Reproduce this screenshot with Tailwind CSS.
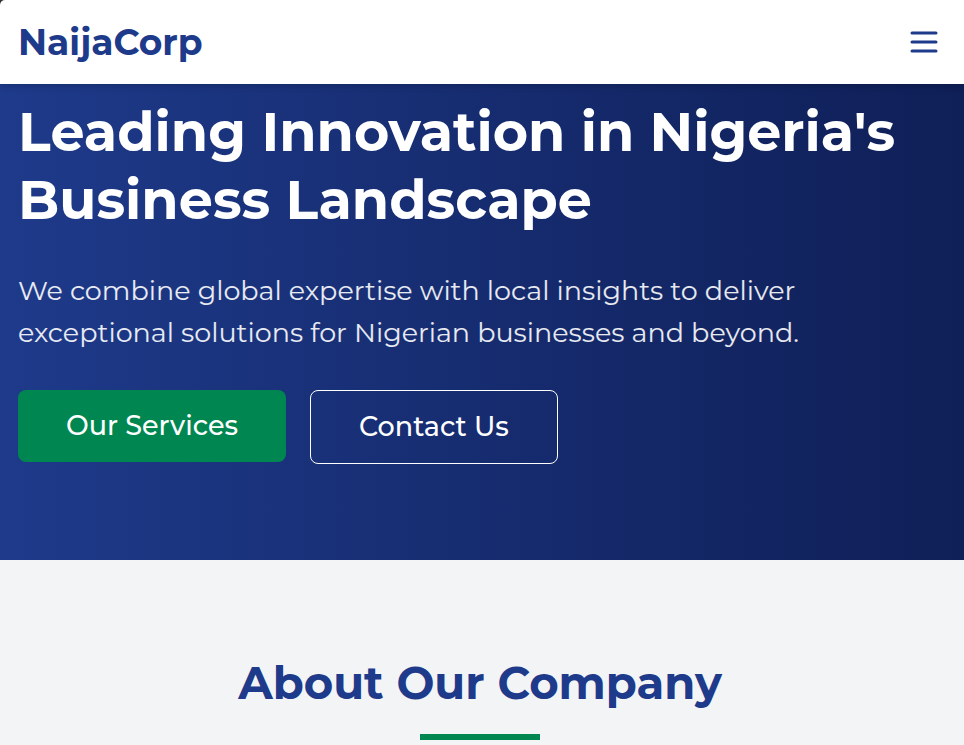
<!DOCTYPE html>
<html lang="en">
<head>
<meta charset="utf-8">
<meta name="viewport" content="width=device-width, initial-scale=1">
<title>NaijaCorp</title>
<script src="https://cdn.jsdelivr.net/npm/@tailwindcss/browser@4"></script>
</head>
<body class="bg-[#333333] font-[Montserrat,Inter,sans-serif] text-gray-800">
<header class="relative z-10 flex items-center justify-between rounded-tl-[5px] bg-white py-[22px] pl-[18px] pr-6 shadow-md">
  <a href="#" class="text-[36px] leading-[40px] font-bold text-[#1e3a8a]">NaijaCorp</a>
  <button type="button" aria-label="Open menu" class="text-[#1e3a8a]">
    <svg class="size-8" viewBox="0 0 32 32" fill="none" stroke="currentColor" stroke-width="3" stroke-linecap="round"><path d="M4 7h24M4 16h24M4 25h24"/></svg>
  </button>
</header>
<main>
  <section class="bg-linear-to-r from-[#1e3a8a] to-[#0f1f57] px-[18px] pt-[14px] pb-24 text-white">
    <h1 class="mb-9 text-[54px] leading-[68px] font-bold">Leading Innovation in Nigeria's Business Landscape</h1>
    <p class="mb-9 max-w-[900px] text-[27px] leading-[42px] text-white/90">We combine global expertise with local insights to deliver exceptional solutions for Nigerian businesses and beyond.</p>
    <div class="flex items-start gap-6">
      <a href="#services" class="rounded-lg bg-[#008751] px-12 py-4 text-[27px] leading-[40px] font-medium">Our Services</a>
      <a href="#contact" class="rounded-lg border border-white px-12 py-4 text-[27px] leading-[40px] font-medium">Contact Us</a>
    </div>
  </section>
  <section id="about" class="flex flex-col items-center bg-gray-100 pt-24 pr-[22px] pb-[5px] pl-[18px]">
    <h2 class="mb-6 text-[45px] leading-[54px] font-bold text-[#1e3a8a]">About Our Company</h2>
    <div class="h-[6px] w-[120px] bg-[#008751]"></div>
  </section>
</main>
</body>
</html>
